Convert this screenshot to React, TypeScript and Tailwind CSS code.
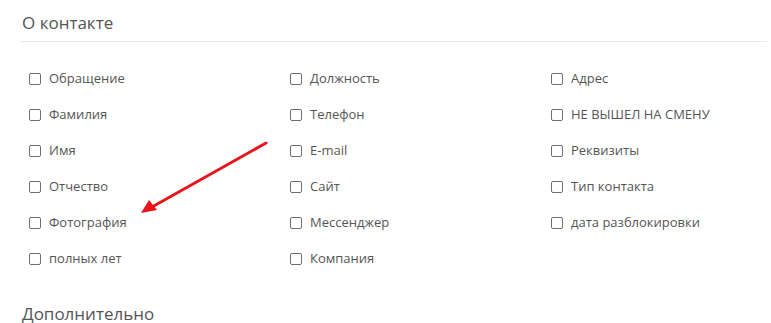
import React from "react";

const items = [
  "Обращение",
  "Фамилия",
  "Имя",
  "Отчество",
  "Фотография",
  "полных лет",
  "Должность",
  "Телефон",
  "E-mail",
  "Сайт",
  "Мессенджер",
  "Компания",
  "Адрес",
  "НЕ ВЫШЕЛ НА СМЕНУ",
  "Реквизиты",
  "Тип контакта",
  "дата разблокировки",
];

export default function App() {
  return (
    <div
      className="relative w-[771px] h-[323px] overflow-hidden bg-white text-[#555]"
      style={{ fontFamily: '"Open Sans", "Noto Sans", sans-serif' }}
    >
      <div className="pl-[20px] pr-[4px]">
        <div className="pt-[11px] pb-[6px] pl-[2px] border-b border-[#e8e8e8] text-[17px] leading-[24px]">
          О контакте
        </div>
        <div className="pl-[9px] pt-[19px] grid grid-flow-col grid-rows-6 grid-cols-[261px_261px_1fr]">
          {items.map((t) => (
            <label key={t} className="h-[36px] flex items-center gap-[8px] text-[13px]">
              <span className="w-[12px] h-[12px] border border-[#6f6f6f] rounded-[2px] shrink-0" />
              <span>{t}</span>
            </label>
          ))}
        </div>
        <div className="pt-[25px] pl-[2px] text-[17px] leading-[24px]">Дополнительно</div>
      </div>
      <svg className="absolute left-0 top-0 pointer-events-none" width="771" height="323">
        <line x1="266" y1="143" x2="152" y2="207" stroke="#e8141b" strokeWidth="3" strokeLinecap="round" />
        <polygon points="141,213 149,200 157,210" fill="#e8141b" />
      </svg>
    </div>
  );
}
